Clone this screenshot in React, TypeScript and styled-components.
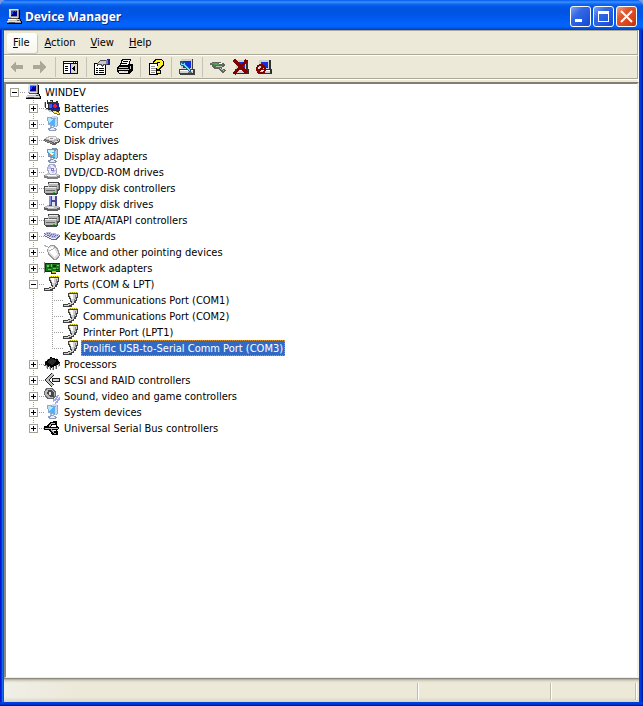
import React, { useState } from "react";
import styled, { createGlobalStyle, css } from "styled-components";

const GlobalStyle = createGlobalStyle`
  * { box-sizing: border-box; }
  html, body { margin: 0; }
  body { background: #7a98e0; }
  button { font: inherit; color: inherit; border: 0; padding: 0; background: none; }
`;

const Window = styled.main`
  min-height: 100vh;
  display: flex;
  flex-direction: column;
  padding: 0 4px 4px;
  border-radius: 7px 7px 0 0;
  font: 11px/16px "DejaVu Sans Condensed", Tahoma, sans-serif;
  color: #000;
  background:
    linear-gradient(#0042e0, #0038d8 50%, #001090) bottom / 100% 4px no-repeat,
    linear-gradient(90deg, #0019cf 0 1px, #0831d9 1px 2px, #166aee 2px 3px, #0855dd 3px 4px) left / 4px 100% no-repeat,
    linear-gradient(90deg, #0048f0, #0038d8 50%, #001090) right / 4px 100% no-repeat,
    #0855dd;
`;

const TitleBar = styled.header`
  height: 30px;
  flex: none;
  margin: 0 -4px;
  padding: 3px 6px 0;
  display: flex;
  align-items: center;
  border-radius: 7px 7px 0 0;
  background: linear-gradient(
    #0058ee 0, #3a92ff 2px, #1068f0 4px, #0055e5 7px, #0054e3 12px,
    #0058ee 18px, #0264fc 24px, #0262f8 27px, #0048d0 29px, #0040c0 30px
  );
`;

const Title = styled.h1`
  margin: 0 auto 0 3px;
  font: bold 12px/20px "Noto Sans", "Trebuchet MS", sans-serif;
  color: #fff;
  text-shadow: 1px 1px 0 #0a2a8c;
  white-space: nowrap;
`;

const CaptionButtons = styled.div`
  display: flex;
  gap: 2px;
`;

const CaptionButton = styled.button<{ $danger?: boolean }>`
  width: 21px;
  height: 21px;
  display: grid;
  place-items: center;
  border: 1px solid #fff;
  border-radius: 3px;
  background: ${(p) =>
    p.$danger
      ? "linear-gradient(135deg, #f0a088, #e0552f 35%, #d8441c 70%, #b83410)"
      : "linear-gradient(135deg, #7ca4f4, #3468e4 35%, #2058e0 70%, #1848c0)"};
`;

const Bars = styled.div`
  flex: none;
  border-top: 1px solid #aca899;
  border-right: 1px solid #fff;
  background: #ece9d8;
`;

const bar = css`
  display: flex;
  align-items: center;
  border-right: 1px solid #aca899;
  border-bottom: 1px solid #aca899;
`;

const MenuBar = styled.nav`
  ${bar}
  height: 24px;
  padding-left: 1px;
`;

const MenuItem = styled.button<{ $hot?: boolean }>`
  height: 20px;
  margin-left: 2px;
  padding: 1px 7px 0 6px;
  border-radius: 3px;
  &::first-letter { text-decoration: underline; }
  ${(p) =>
    p.$hot &&
    css`
      background: linear-gradient(#fff, #f6f5ee);
      box-shadow: 1px 1px 1px #c8c5b5, 0 0 1px #d8d5c8;
    `}
`;

const ToolBar = styled.div`
  ${bar}
  height: 24px;
  padding-left: 1px;
  border-top: 1px solid #fff;
`;

const ToolButton = styled.button`
  width: 23px;
  height: 22px;
  display: grid;
  place-items: center;
`;

const Separator = styled.span`
  width: 1px;
  height: 20px;
  margin: 0 3px 0 4px;
  background: #c5c2b8;
`;

const Lip = styled.div`
  height: 3px;
  border-top: 1px solid #fff;
`;

const Pane = styled.section`
  flex: 1;
  background: #fff;
  border: 2px solid;
  border-color: #716f64 #f1efe2 #f1efe2 #716f64;
  border-top-color: #817f74;
  border-left-color: #8c8a7e;
  border-bottom-width: 1px;
`;

const Tree = styled.ul`
  margin: 0;
  padding: 0;
  list-style: none;
`;

const Row = styled.div`
  height: 16px;
  display: flex;
  align-items: center;
  white-space: nowrap;
`;

type Line = "none" | "full" | "tee" | "end" | "dash";
const vertical = "repeating-linear-gradient(#a0a0a0 0 1px, transparent 1px 2px) 8px 0";
const horizontal = "repeating-linear-gradient(90deg, #a0a0a0 0 1px, transparent 1px 2px) 8px 8px / 11px 1px no-repeat";
const lines: Record<Line, string> = {
  none: "none",
  full: `${vertical} / 1px 16px no-repeat`,
  tee: `${vertical} / 1px 16px no-repeat, ${horizontal}`,
  end: `${vertical} / 1px 8px no-repeat, ${horizontal}`,
  dash: horizontal,
};

const Guide = styled.span<{ $line: Line }>`
  width: 19px;
  height: 16px;
  flex: none;
  display: flex;
  padding: 4px;
  background: ${(p) => lines[p.$line]};
`;

const Expander = styled.button`
  width: 9px;
  height: 9px;
  display: block;
  border: 1px solid #a5a396;
  background: #fff;
  svg { display: block; }
`;

const Label = styled.span<{ $selected?: boolean }>`
  height: 16px;
  margin-left: 2px;
  padding: 0 2px;
  line-height: 17px;
  ${(p) =>
    p.$selected &&
    css`
      color: #fff;
      background: #316ac5;
      outline: 1px dotted #d89030;
      outline-offset: -1px;
    `}
`;

const StatusBar = styled.footer`
  height: 24px;
  flex: none;
  display: flex;
  padding: 4px 2px 2px 0;
  border-top: 1px solid #8c8a7e;
  background:
    linear-gradient(#aca899, #dedbca 2px, transparent 4px),
    linear-gradient(transparent 18px, #d8d5c3),
    linear-gradient(90deg, #f0efe8, #ece9d8 80px);
`;

const StatusPart = styled.span<{ $width?: number }>`
  flex: ${(p) => (p.$width ? `0 0 ${p.$width}px` : "1")};
  border-right: 1px solid #fff;
  box-shadow: inset -1px 0 0 #c0bdad;
`;

const Svg = ({ w = 16, h = 16, children }: { w?: number; h?: number; children: React.ReactNode }) => (
  <svg width={w} height={h} viewBox={`0 0 ${w} ${h}`} shapeRendering="crispEdges" aria-hidden="true">
    {children}
  </svg>
);
const P = ({ c, d }: { c: string; d: string }) => <path fill={c} d={d} />;
const S = ({ c, d, w = 1 }: { c: string; d: string; w?: number }) => (
  <path fill="none" stroke={c} strokeWidth={w} d={d} />
);

const PcShape = () => (
  <>
    <P c="#000" d="M13 1h1v9h-1zM4 9h9v1H4zM14 10h1v3h-1zM15 12h1v3h-1zM1 14h14v1H1z" />
    <P c="#909090" d="M3 0h10v9H3zM2 10h12v3H2zM1 12h14v2H1z" />
    <P c="#e0e0e0" d="M3 0h9v1H3zM3 1h2v7H3zM5 8h7v1H5zM2 10h11v1H2zM1 12h13v1H1z" />
    <P c="#c0c0c0" d="M11 1h1v7h-1zM2 11h11v1H2z" />
    <P c="#000090" d="M5 2h6v5H5z" />
    <P c="#1848ff" d="M5 2h3v1H7v2H6v1H5zM9 2h1v1H9z" />
    <P c="#fff" d="M2 10h8v1H2zM3 1h1v1H3z" />
    <P c="#505050" d="M3 13h6v1H3zM11 11h2v1h-2zM4 9h8v1H4z" />
  </>
);

const icons: Record<string, React.ReactNode> = {
  pc: <PcShape />,
  battery: (
    <>
      <P c="#303030" d="M1 2h1v6H1zM3 0h1v4H3zM2 8h2v2H2zM4 2h2V0h3v2h3V1h2v2h1l1 8-2 1H6l-2-1z" />
      <P c="#c0c0c0" d="M0 2h1v5H0zM1 9h3v1H1zM6 1h2v1H6zM4 10h3l1 2H5z" />
      <P c="#1020a0" d="M5 4h10v5H5z" />
      <P c="#3860ff" d="M5 4h3v4H5z" />
      <P c="#f02030" d="M10 4h2v1h1v2h-1v1h-2V7H9V5h1z" />
      <P c="#807018" d="M9 11h4v1h2v1h1v2h-3v-1h-3v-1H9z" />
      <P c="#ffe860" d="M9 11h3v1h2v1h1v1h-2v-1h-3v-1H9z" />
    </>
  ),
  monitor: (
    <>
      <P c="#88a8d0" d="M3 1l9-1 2 1v9l-3 1-7-2z" />
      <P c="#50b0f8" d="M4 2l7 1v6L5 8z" />
      <P c="#b0e4ff" d="M4 2l5 1-4 4z" />
      <P c="#c8d8f0" d="M4 1l8-1 2 1-3 1zM11 3l2-1v8l-2 1z" />
      <P c="#a8b8d8" d="M6 10l4 1v2H6z" />
      <P c="#8c9cc0" d="M3 13l4-2 6 2-2 2H6z" />
      <P c="#e8eef8" d="M5 13l3-1 3 1-1 1H6z" />
    </>
  ),
  disk: (
    <>
      <P c="#606060" d="M0 7l5-3h6l5 3v3l-5 3H9L0 9z" />
      <P c="#b8b8b8" d="M0 7l5-3h6l5 3-5 3H9z" />
      <P c="#f0f0f0" d="M2 7l4-2h5l2 1-4 2H7z" />
      <P c="#909090" d="M1 8l8 3v1L1 9zM6 6h3v1H6z" />
      <P c="#d8d8d8" d="M10 10l5-2v1l-5 2z" />
    </>
  ),
  display: (
    <>
      <P c="#7890a8" d="M3 1l9-1 2 1v9l-3 1-7-2z" />
      <P c="#48b8e8" d="M4 2l7 1v6L5 8z" />
      <P c="#c8f4ff" d="M4 2h6v2l-5 1z" />
      <P c="#f0f4f8" d="M6 5h3l1-1v2L8 7H6z" />
      <P c="#e87848" d="M5 6h2v1H5z" />
      <P c="#b8c8e0" d="M11 3l2-1v8l-2 1zM6 10l4 1v2H6z" />
      <P c="#8090a8" d="M3 13l4-2 6 2-2 2H6z" />
      <P c="#e4ecf8" d="M5 13l3-1 3 1-1 1H6z" />
    </>
  ),
  cd: (
    <>
      <P c="#808080" d="M0 11l4-2h8l4 2v3l-4 1H5l-5-1z" />
      <P c="#c8c8c8" d="M0 11l4-2h8l4 2-4 2H5z" />
      <P c="#a8a8c0" d="M5 0h5l2 2 1 3v3l-2 3H6L4 9 3 5l1-3z" />
      <P c="#ececfc" d="M6 1h3l3 4v3l-2 2H6L4 5z" />
      <P c="#c0c0ff" d="M5 2h2l1 3H4zM9 6h3l-2 3H8z" />
      <P c="#8080a8" d="M7 4h3v3H7z" />
      <P c="#fff" d="M8 5h1v1H8zM3 11h9v1H3z" />
    </>
  ),
  controller: (
    <>
      <P c="#484848" d="M4 2h10l2 2v6l-2 1H4zM0 6h12l2 2v6l-2 1H2l-2-2z" />
      <P c="#b8b8b8" d="M4 4h10v5l-2 1H4zM1 8h11v5H1z" />
      <P c="#ececec" d="M5 3h8l1 1H4zM1 7h11v1H1z" />
      <P c="#686868" d="M5 6h8v1H5zM2 10h9v1H2z" />
      <P c="#909090" d="M12 8h1v5h-1zM14 5h1v4h-1z" />
      <P c="#20b828" d="M9 12h2v1H9z" />
    </>
  ),
  floppy: (
    <>
      <P c="#606060" d="M0 11l4-2h8l4 2v3l-4 1H5l-5-1z" />
      <P c="#c0c0c0" d="M0 11l4-2h8l4 2-4 2H5z" />
      <P c="#484890" d="M5 0h8v10H5z" />
      <P c="#8890d8" d="M5 0h2v9H5z" />
      <P c="#dce0f4" d="M8 0h3v4H8zM8 6h3v4H8z" />
      <P c="#f0f0f0" d="M3 11h7v1H3z" />
    </>
  ),
  keyboard: (
    <>
      <P c="#686888" d="M0 5l4-1 11 2 1 2-4 4H8L0 8z" />
      <P c="#b8b8dc" d="M0 5l4-1 11 2-3 4H8z" />
      <P c="#6868b0" d="M3 5h1v1H3zM5 5h1v1H5zM7 6h1v1H7zM9 6h1v1H9zM11 7h1v1h-1zM4 7h1v1H4zM6 7h1v1H6zM8 8h1v1H8zM10 8h1v1h-1zM13 7h1v1h-1z" />
      <P c="#e8e8f8" d="M0 6l8 4h3l4-3v1l-4 3H8L0 7z" />
    </>
  ),
  mouse: (
    <>
      <P c="#b0b0b0" d="M0 1h2v1h2v1H1V2H0z" />
      <P c="#989898" d="M4 3l3-2h4l3 4 2 5-1 4-3 2H9l-4-4-2-5z" />
      <P c="#e0e0e0" d="M4 4l3-2h3l3 4 2 5-2 3-3 1-4-4-2-4z" />
      <P c="#fff" d="M5 4l3-1 3 3 2 4-2 3-4-3-2-3z" />
      <P c="#b0b0b0" d="M5 7h2V6h2V5h1V4h1V3h-1v1H9v1H7v1H5z" />
    </>
  ),
  network: (
    <>
      <P c="#083808" d="M1 3h15v9h-4v2H7v-2H1z" />
      <P c="#187818" d="M2 4h14v7H2z" />
      <P c="#68c868" d="M3 5h2v2H3zM7 4h1v3H7zM9 8h3v1H9zM13 5h2v1h-2zM4 9h3v1H4zM13 8h1v2h-1z" />
      <P c="#083008" d="M5 7h2v1H5zM9 5h3v2H9zM12 9h3v1h-3z" />
      <P c="#d0b820" d="M8 11h4v2H8z" />
      <P c="#888" d="M0 2h1v11H0z" />
    </>
  ),
  port: (
    <>
      <P c="#fff000" d="M6 0h1v1H6zM8 0h1v1H8zM10 0h1v1h-1zM12 0h1v1h-1zM14 0h1v1h-1z" />
      <P c="#b0a000" d="M7 0h1v1H7zM9 0h1v1H9zM11 0h1v1h-1zM13 0h1v1h-1z" />
      <P c="#404040" d="M5 1h10v5h-1v3h-1v2h-2v2H9v2H0v-3h5v-1h3v-1H7V7H6V5H5z" />
      <P c="#d0d0d0" d="M6 2h8v3h-1v3h-1v1H8V6H7V4H6z" />
      <P c="#fff" d="M7 2h3v5H8V4H7z" />
      <P c="#909090" d="M12 3h1v4h-1zM11 7h1v2h-1z" />
      <P c="#d0d0d0" d="M9 9h2v2h-1v1H8v1H6v1H1v-1h4v-1h2v-1h2z" />
    </>
  ),
  processor: (
    <>
      <P c="#585858" d="M1 5h1v3H1zM3 9h1v4H3zM6 11h1v3H6zM9 10h1v4H9zM12 9h1v4h-1zM15 6h1v4h-1zM0 9h2v1H0z" />
      <P c="#000" d="M1 6l6-5 8 3 1 3-8 5-7-3z" />
      <P c="#282828" d="M3 6l4-4 6 3-5 4z" />
      <P c="#b8b8b8" d="M3 3h1v1H3zM5 2h1v1H5zM12 2h1v1h-1zM14 4h1v1h-1zM2 9h1v3H2zM5 10h1v3H5zM8 11h1v3H8zM11 10h1v3h-1zM14 8h1v3h-1z" />
    </>
  ),
  scsi: (
    <>
      <S c="#202020" w={4} d="M9 2L3 8l6 6" />
      <S c="#c0c0c0" w={2} d="M9 2L3 8l6 6" />
      <P c="#202020" d="M8 6h8v4H8z" />
      <P c="#d0d0d0" d="M9 7h6v2H9z" />
    </>
  ),
  sound: (
    <>
      <P c="#686868" d="M2 0h6l4 4v5l-3 2H4L1 9 0 4z" />
      <P c="#b8b8b8" d="M3 1h4l4 4v3l-3 2H4L1 7V3z" />
      <P c="#484848" d="M4 2h3l3 3v4H6L3 6z" />
      <P c="#e0e0e0" d="M5 4h2v3H5z" />
      <S c="#a0a8f0" w={2} d="M9 13l3-2 2-4M11 15l2-1 3-5" />
    </>
  ),
  usb: (
    <>
      <S c="#000" w={3} d="M0 8h14M4 7l4-4h4M6 9l3 4h3" />
      <P c="#000" d="M9 1h4v4H9zM10 11h4v4h-4zM12 5l4 3-4 3zM0 6h4v4H0z" />
      <S c="#b8b8b8" d="M1 8h13M5 7l3-4h3M7 9l3 4h2" />
    </>
  ),
};

const PanelIcon = () => (
  <Svg w={15} h={13}>
    <P c="#000080" d="M0 0h15v13H0z" />
    <P c="#fff" d="M1 3h6v9H1z" />
    <P c="#dcd8cc" d="M8 3h6v9H8z" />
    <P c="#000" d="M2 5h3v1H2zM2 7h3v1H2zM2 9h3v1H2zM12 4v7L9 8V7z" />
    <P c="#fff" d="M1 1h9v1H1zM11 1h1v1h-1zM13 1h1v1h-1z" />
  </Svg>
);
const Arrow = ({ right }: { right?: boolean }) => (
  <Svg w={13} h={12}>
    <P c="#aca899" d={right ? "M7 0l6 6-6 6V8H0V4h7z" : "M6 0L0 6l6 6V8h7V4H6z"} />
  </Svg>
);
const PropertiesIcon = () => (
  <Svg>
    <P c="#000" d="M0 4h12v12H0z" />
    <P c="#fff" d="M1 5h10v10H1z" />
    <P c="#000" d="M2 9h2v1H2zM5 9h5v1H5zM2 11h2v1H2zM5 11h5v1H5zM2 13h2v1H2zM5 13h5v1H5zM3 6h1v1H3zM4 5h2v1H4z" />
    <P c="#505050" d="M3 4l3-3h6l2 1v4h-4L8 8 6 6H3z" />
    <P c="#c8c8c8" d="M5 3l2-1h5v3H9L8 6 7 5H4z" />
    <P c="#202088" d="M13 0h3v6h-3z" />
    <P c="#7080c0" d="M12 1h2v4h-2z" />
  </Svg>
);
const PrintIcon = () => (
  <Svg>
    <P c="#000" d="M5 0h9v2h-1v3h2l1 1v5l-4 4H2l-2-2V8l3-3z" />
    <P c="#fff" d="M6 1h7l-2 5H4z" />
    <P c="#000" d="M6 2h5v1H6zM5 4h5v1H5z" />
    <P c="#c8c8c8" d="M2 8h9v1H2zM1 10h11v1H1zM13 7h1v3h-1z" />
    <P c="#e8e8e8" d="M2 12h9v2H2z" />
    <P c="#f0e800" d="M7 12h3v1H7z" />
  </Svg>
);
const HelpIcon = () => (
  <Svg>
    <P c="#000" d="M1 4h9v12H1z" />
    <P c="#fff" d="M2 5h7v10H2z" />
    <P c="#909090" d="M3 7h4v1H3zM3 9h5v1H3zM3 11h5v1H3zM3 13h4v1H3z" />
    <P c="#000" d="M7 0h6l3 2v5l-4 3v1h1v4H8v-4l1-4 3-3H9v1H5V2z" />
    <P c="#ffee20" d="M8 1h5l2 2v3l-4 3v1H9V7l3-2V3H9v1H6V3zM9 12h3v2H9z" />
  </Svg>
);
const ScanIcon = () => (
  <Svg>
    <P c="#404040" d="M2 0h12v10h1l1 1v5H1l-1-1v-5h2z" />
    <P c="#d0d0d0" d="M2 0h11v10H2zM1 11h13v3H1z" />
    <P c="#1030e0" d="M4 2h8v7H4z" />
    <P c="#fff" d="M1 11h13v1H1z" />
    <P c="#707070" d="M9 13h4v1H9z" />
    <P c="#206080" d="M1 2h3v1h2v2l6 6v2h-2L4 7H2L1 5z" />
    <P c="#70e0f8" d="M2 4h1v1h2V3l1 2 5 6v1h-1L4 6H2z" />
  </Svg>
);
const UpdateIcon = () => (
  <Svg>
    <P c="#606860" d="M0 4l4-1h6l5 2v2l-4 2 5 2v1l-3 2-5-4H5L2 8V6H0z" />
    <P c="#48a850" d="M1 4h6l3 2H5z" />
    <P c="#b8bcb4" d="M5 7h7l2-1-3 2H6zM9 9l4 1 1 2-3-1z" />
    <P c="#fff" d="M8 4h3l2 1h-3z" />
  </Svg>
);
const UninstallIcon = () => (
  <Svg>
    <ScanBase />
    <path stroke="#800000" strokeWidth="3" d="M1 1l13 13M14 1L1 15" />
  </Svg>
);
const ScanBase = () => (
  <>
    <P c="#303030" d="M3 1h12v9h1v5H2v-5h1z" />
    <P c="#d0d0d0" d="M3 1h10v9H3zM2 11h12v3H2z" />
    <P c="#1030e0" d="M5 3h7v6H5z" />
    <P c="#fff" d="M2 11h12v1H2z" />
  </>
);
const DisableIcon = () => (
  <Svg>
    <ScanBase />
    <circle cx="5" cy="10" r="4" fill="none" stroke="#800000" strokeWidth="2" />
    <path stroke="#800000" strokeWidth="2" d="M2 13l6-6" />
  </Svg>
);

const devices: { name: string; icon: string; ports?: string[] }[] = [
  { name: "Batteries", icon: "battery" },
  { name: "Computer", icon: "monitor" },
  { name: "Disk drives", icon: "disk" },
  { name: "Display adapters", icon: "display" },
  { name: "DVD/CD-ROM drives", icon: "cd" },
  { name: "Floppy disk controllers", icon: "controller" },
  { name: "Floppy disk drives", icon: "floppy" },
  { name: "IDE ATA/ATAPI controllers", icon: "controller" },
  { name: "Keyboards", icon: "keyboard" },
  { name: "Mice and other pointing devices", icon: "mouse" },
  { name: "Network adapters", icon: "network" },
  {
    name: "Ports (COM & LPT)",
    icon: "port",
    ports: [
      "Communications Port (COM1)",
      "Communications Port (COM2)",
      "Printer Port (LPT1)",
      "Prolific USB-to-Serial Comm Port (COM3)",
    ],
  },
  { name: "Processors", icon: "processor" },
  { name: "SCSI and RAID controllers", icon: "scsi" },
  { name: "Sound, video and game controllers", icon: "sound" },
  { name: "System devices", icon: "monitor" },
  { name: "Universal Serial Bus controllers", icon: "usb" },
];

const Toggle = ({ open, name, onClick }: { open: boolean; name: string; onClick?: () => void }) => (
  <Expander aria-label={`${open ? "Collapse" : "Expand"} ${name}`} onClick={onClick}>
    <Svg w={7} h={7}>
      <P c="#000" d={open ? "M1 3h5v1H1z" : "M1 3h2V1h1v2h2v1H4v2H3V4H1z"} />
    </Svg>
  </Expander>
);

export default function App() {
  const [portsOpen, setPortsOpen] = useState(true);
  const [selected, setSelected] = useState("Prolific USB-to-Serial Comm Port (COM3)");
  return (
    <>
      <GlobalStyle />
      <Window>
        <TitleBar>
          <Svg><PcShape /></Svg>
          <Title>Device Manager</Title>
          <CaptionButtons>
            <CaptionButton aria-label="Minimize">
              <Svg w={19} h={19}><P c="#fff" d="M4 12h7v3H4z" /></Svg>
            </CaptionButton>
            <CaptionButton aria-label="Maximize">
              <svg width="19" height="19" viewBox="0 0 19 19" shapeRendering="crispEdges" aria-hidden="true">
                <path fill="#fff" fillRule="evenodd" d="M4 4h11v11H4zM5 7v7h9V7z" />
              </svg>
            </CaptionButton>
            <CaptionButton aria-label="Close" $danger>
              <svg width="19" height="19" viewBox="0 0 19 19" aria-hidden="true">
                <path stroke="#fff" strokeWidth="2" d="M4 4l11 11M15 4L4 15" />
              </svg>
            </CaptionButton>
          </CaptionButtons>
        </TitleBar>
        <Bars>
          <MenuBar>
            {["File", "Action", "View", "Help"].map((item) => (
              <MenuItem key={item} $hot={item === "File"}>{item}</MenuItem>
            ))}
          </MenuBar>
          <ToolBar role="toolbar">
            <ToolButton aria-label="Back" disabled><Arrow /></ToolButton>
            <ToolButton aria-label="Forward" disabled><Arrow right /></ToolButton>
            <Separator />
            <ToolButton aria-label="Show or hide console tree"><PanelIcon /></ToolButton>
            <Separator />
            <ToolButton aria-label="Properties"><PropertiesIcon /></ToolButton>
            <ToolButton aria-label="Print"><PrintIcon /></ToolButton>
            <Separator />
            <ToolButton aria-label="Help topics"><HelpIcon /></ToolButton>
            <Separator />
            <ToolButton aria-label="Scan for hardware changes"><ScanIcon /></ToolButton>
            <Separator />
            <ToolButton aria-label="Update driver"><UpdateIcon /></ToolButton>
            <ToolButton aria-label="Uninstall"><UninstallIcon /></ToolButton>
            <ToolButton aria-label="Disable"><DisableIcon /></ToolButton>
          </ToolBar>
          <Lip />
        </Bars>
        <Pane>
          <Tree role="tree" aria-label="Devices">
            <li role="treeitem" aria-expanded="true">
              <Row>
                <Guide $line="dash"><Toggle open name="WINDEV" /></Guide>
                <Svg>{icons.pc}</Svg>
                <Label>WINDEV</Label>
              </Row>
              <Tree role="group">
                {devices.map((device, i) => (
                  <li key={device.name} role="treeitem">
                    <Row>
                      <Guide $line="none" />
                      <Guide $line={i === devices.length - 1 ? "end" : "tee"}>
                        <Toggle
                          open={!!device.ports && portsOpen}
                          name={device.name}
                          onClick={device.ports && (() => setPortsOpen(!portsOpen))}
                        />
                      </Guide>
                      <Svg>{icons[device.icon]}</Svg>
                      <Label $selected={selected === device.name} onClick={() => setSelected(device.name)}>
                        {device.name}
                      </Label>
                    </Row>
                    {device.ports && portsOpen && (
                      <Tree role="group">
                        {device.ports.map((port, j, all) => (
                          <li key={port} role="treeitem" aria-selected={selected === port}>
                            <Row>
                              <Guide $line="none" />
                              <Guide $line="full" />
                              <Guide $line={j === all.length - 1 ? "end" : "tee"} />
                              <Svg>{icons.port}</Svg>
                              <Label $selected={selected === port} onClick={() => setSelected(port)}>
                                {port}
                              </Label>
                            </Row>
                          </li>
                        ))}
                      </Tree>
                    )}
                  </li>
                ))}
              </Tree>
            </li>
          </Tree>
        </Pane>
        <StatusBar>
          <StatusPart />
          <StatusPart $width={133} />
          <StatusPart $width={85} />
        </StatusBar>
      </Window>
    </>
  );
}
